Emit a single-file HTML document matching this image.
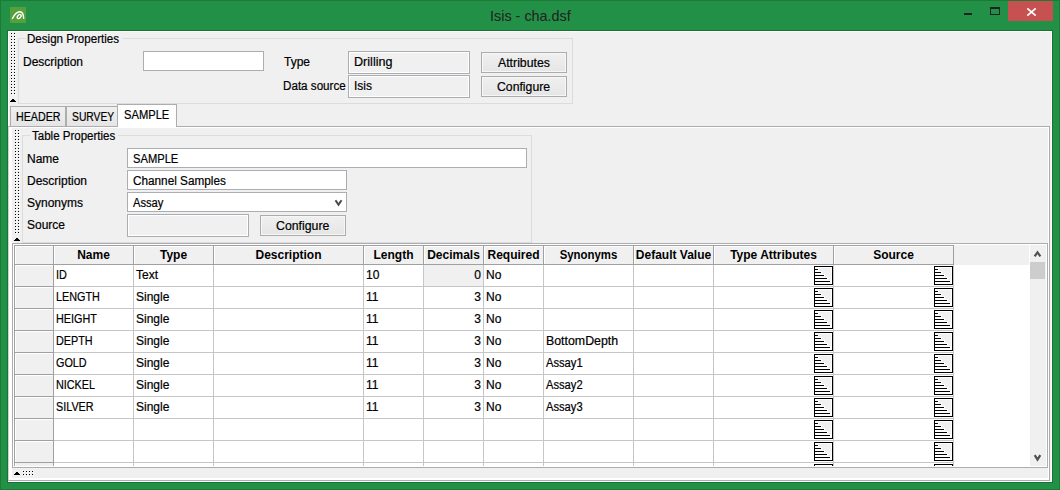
<!DOCTYPE html>
<html><head><meta charset="utf-8">
<style>
*{margin:0;padding:0;box-sizing:border-box}
html,body{width:1060px;height:490px;overflow:hidden}
body{background:#f0f0f0;font-family:"Liberation Sans",sans-serif;font-size:12px;color:#000;position:relative}
.a{position:absolute}
.t{position:absolute;white-space:nowrap;line-height:9px;height:9px;transform-origin:0 0;-webkit-text-stroke:0.2px #000}
.b{font-weight:bold;-webkit-text-stroke:0}
</style></head><body>
<div class="a" style="left:0px;top:0px;width:1060px;height:490px;border:1px solid #1c7c36;background:#229147"></div>
<div class="a" style="left:10px;top:7px;width:16px;height:16px;background:#55a03a"></div>
<svg class="a" style="left:10px;top:7px" width="16" height="16" viewBox="10 7 16 16"><path d="M12.4 18.5 C14 15.4 16.6 11.7 19.9 11.7 C22.4 11.7 23.5 13.8 23.7 18.4" fill="none" stroke="#fff" stroke-width="1.35" stroke-linecap="round"/><ellipse cx="19.2" cy="16.5" rx="1.5" ry="2.4" transform="rotate(42 19.2 16.5)" fill="none" stroke="#fff" stroke-width="1.3"/></svg>
<div class="t" style="left:490px;top:11px;font-size:15px;transform:scaleX(0.96);color:#222;-webkit-text-stroke:0">Isis - cha.dsf</div>
<div class="a" style="left:964px;top:13px;width:8px;height:2px;background:#222"></div>
<div class="a" style="left:990px;top:7px;width:10px;height:8px;border:1px solid #222;border-top-width:2px"></div>
<div class="a" style="left:1008px;top:1px;width:45px;height:20px;background:#c75050"></div>
<svg class="a" style="left:1008px;top:1px" width="45" height="20"><path d="M19.3 7.3 L27.7 14.7 M27.7 7.3 L19.3 14.7" stroke="#fff" stroke-width="1.7"/></svg>
<div class="a" style="left:7px;top:30px;width:1046px;height:453px;border:1px solid #177330;background:#fff"></div>
<div class="a" style="left:9px;top:32px;width:1042px;height:449px;background:#f0f0f0"></div>
<div class="a" style="left:12px;top:34px;width:1px;height:1px;background:#fff"></div>
<div class="a" style="left:11px;top:33px;width:1px;height:1px;background:#000"></div>
<div class="a" style="left:12px;top:37px;width:1px;height:1px;background:#fff"></div>
<div class="a" style="left:11px;top:36px;width:1px;height:1px;background:#000"></div>
<div class="a" style="left:12px;top:40px;width:1px;height:1px;background:#fff"></div>
<div class="a" style="left:11px;top:39px;width:1px;height:1px;background:#000"></div>
<div class="a" style="left:12px;top:43px;width:1px;height:1px;background:#fff"></div>
<div class="a" style="left:11px;top:42px;width:1px;height:1px;background:#000"></div>
<div class="a" style="left:12px;top:46px;width:1px;height:1px;background:#fff"></div>
<div class="a" style="left:11px;top:45px;width:1px;height:1px;background:#000"></div>
<div class="a" style="left:12px;top:49px;width:1px;height:1px;background:#fff"></div>
<div class="a" style="left:11px;top:48px;width:1px;height:1px;background:#000"></div>
<div class="a" style="left:12px;top:52px;width:1px;height:1px;background:#fff"></div>
<div class="a" style="left:11px;top:51px;width:1px;height:1px;background:#000"></div>
<div class="a" style="left:12px;top:55px;width:1px;height:1px;background:#fff"></div>
<div class="a" style="left:11px;top:54px;width:1px;height:1px;background:#000"></div>
<div class="a" style="left:12px;top:58px;width:1px;height:1px;background:#fff"></div>
<div class="a" style="left:11px;top:57px;width:1px;height:1px;background:#000"></div>
<div class="a" style="left:12px;top:61px;width:1px;height:1px;background:#fff"></div>
<div class="a" style="left:11px;top:60px;width:1px;height:1px;background:#000"></div>
<div class="a" style="left:12px;top:64px;width:1px;height:1px;background:#fff"></div>
<div class="a" style="left:11px;top:63px;width:1px;height:1px;background:#000"></div>
<div class="a" style="left:12px;top:67px;width:1px;height:1px;background:#fff"></div>
<div class="a" style="left:11px;top:66px;width:1px;height:1px;background:#000"></div>
<div class="a" style="left:12px;top:70px;width:1px;height:1px;background:#fff"></div>
<div class="a" style="left:11px;top:69px;width:1px;height:1px;background:#000"></div>
<div class="a" style="left:12px;top:73px;width:1px;height:1px;background:#fff"></div>
<div class="a" style="left:11px;top:72px;width:1px;height:1px;background:#000"></div>
<div class="a" style="left:12px;top:76px;width:1px;height:1px;background:#fff"></div>
<div class="a" style="left:11px;top:75px;width:1px;height:1px;background:#000"></div>
<div class="a" style="left:12px;top:79px;width:1px;height:1px;background:#fff"></div>
<div class="a" style="left:11px;top:78px;width:1px;height:1px;background:#000"></div>
<div class="a" style="left:12px;top:82px;width:1px;height:1px;background:#fff"></div>
<div class="a" style="left:11px;top:81px;width:1px;height:1px;background:#000"></div>
<div class="a" style="left:12px;top:85px;width:1px;height:1px;background:#fff"></div>
<div class="a" style="left:11px;top:84px;width:1px;height:1px;background:#000"></div>
<div class="a" style="left:12px;top:88px;width:1px;height:1px;background:#fff"></div>
<div class="a" style="left:11px;top:87px;width:1px;height:1px;background:#000"></div>
<div class="a" style="left:12px;top:91px;width:1px;height:1px;background:#fff"></div>
<div class="a" style="left:11px;top:90px;width:1px;height:1px;background:#000"></div>
<div class="a" style="left:12px;top:94px;width:1px;height:1px;background:#fff"></div>
<div class="a" style="left:11px;top:93px;width:1px;height:1px;background:#000"></div>
<div class="a" style="left:15px;top:34px;width:1px;height:1px;background:#fff"></div>
<div class="a" style="left:14px;top:33px;width:1px;height:1px;background:#000"></div>
<div class="a" style="left:15px;top:37px;width:1px;height:1px;background:#fff"></div>
<div class="a" style="left:14px;top:36px;width:1px;height:1px;background:#000"></div>
<div class="a" style="left:15px;top:40px;width:1px;height:1px;background:#fff"></div>
<div class="a" style="left:14px;top:39px;width:1px;height:1px;background:#000"></div>
<div class="a" style="left:15px;top:43px;width:1px;height:1px;background:#fff"></div>
<div class="a" style="left:14px;top:42px;width:1px;height:1px;background:#000"></div>
<div class="a" style="left:15px;top:46px;width:1px;height:1px;background:#fff"></div>
<div class="a" style="left:14px;top:45px;width:1px;height:1px;background:#000"></div>
<div class="a" style="left:15px;top:49px;width:1px;height:1px;background:#fff"></div>
<div class="a" style="left:14px;top:48px;width:1px;height:1px;background:#000"></div>
<div class="a" style="left:15px;top:52px;width:1px;height:1px;background:#fff"></div>
<div class="a" style="left:14px;top:51px;width:1px;height:1px;background:#000"></div>
<div class="a" style="left:15px;top:55px;width:1px;height:1px;background:#fff"></div>
<div class="a" style="left:14px;top:54px;width:1px;height:1px;background:#000"></div>
<div class="a" style="left:15px;top:58px;width:1px;height:1px;background:#fff"></div>
<div class="a" style="left:14px;top:57px;width:1px;height:1px;background:#000"></div>
<div class="a" style="left:15px;top:61px;width:1px;height:1px;background:#fff"></div>
<div class="a" style="left:14px;top:60px;width:1px;height:1px;background:#000"></div>
<div class="a" style="left:15px;top:64px;width:1px;height:1px;background:#fff"></div>
<div class="a" style="left:14px;top:63px;width:1px;height:1px;background:#000"></div>
<div class="a" style="left:15px;top:67px;width:1px;height:1px;background:#fff"></div>
<div class="a" style="left:14px;top:66px;width:1px;height:1px;background:#000"></div>
<div class="a" style="left:15px;top:70px;width:1px;height:1px;background:#fff"></div>
<div class="a" style="left:14px;top:69px;width:1px;height:1px;background:#000"></div>
<div class="a" style="left:15px;top:73px;width:1px;height:1px;background:#fff"></div>
<div class="a" style="left:14px;top:72px;width:1px;height:1px;background:#000"></div>
<div class="a" style="left:15px;top:76px;width:1px;height:1px;background:#fff"></div>
<div class="a" style="left:14px;top:75px;width:1px;height:1px;background:#000"></div>
<div class="a" style="left:15px;top:79px;width:1px;height:1px;background:#fff"></div>
<div class="a" style="left:14px;top:78px;width:1px;height:1px;background:#000"></div>
<div class="a" style="left:15px;top:82px;width:1px;height:1px;background:#fff"></div>
<div class="a" style="left:14px;top:81px;width:1px;height:1px;background:#000"></div>
<div class="a" style="left:15px;top:85px;width:1px;height:1px;background:#fff"></div>
<div class="a" style="left:14px;top:84px;width:1px;height:1px;background:#000"></div>
<div class="a" style="left:15px;top:88px;width:1px;height:1px;background:#fff"></div>
<div class="a" style="left:14px;top:87px;width:1px;height:1px;background:#000"></div>
<div class="a" style="left:15px;top:91px;width:1px;height:1px;background:#fff"></div>
<div class="a" style="left:14px;top:90px;width:1px;height:1px;background:#000"></div>
<div class="a" style="left:15px;top:94px;width:1px;height:1px;background:#fff"></div>
<div class="a" style="left:14px;top:93px;width:1px;height:1px;background:#000"></div>
<div class="a" style="left:12px;top:99px;width:2px;height:1px;background:#000"></div>
<div class="a" style="left:11px;top:100px;width:4px;height:1px;background:#000"></div>
<div class="a" style="left:10px;top:101px;width:6px;height:1px;background:#000"></div>
<div class="a" style="left:18px;top:38px;width:555px;height:66px;border:1px solid #dcdcdc;"></div>
<div class="a" style="left:26px;top:33px;width:96px;height:12px;background:#f0f0f0"></div>
<div class="t" style="left:27px;top:35px;font-size:12px;transform:scaleX(0.965);">Design Properties</div>
<div class="t" style="left:23px;top:58px;font-size:12px;">Description</div>
<div class="a" style="left:143px;top:51px;width:121px;height:20px;border:1px solid #abadb3;background:#fff"></div>
<div class="t" style="left:284px;top:58px;font-size:12px;">Type</div>
<div class="t" style="left:283px;top:82px;font-size:12px;transform:scaleX(0.97);">Data source</div>
<div class="a" style="left:348px;top:51px;width:122px;height:23px;border:1px solid #abadb3;background:#f0f0f0;box-shadow:inset 0 0 0 1px #fff"></div>
<div class="a" style="left:348px;top:75px;width:122px;height:23px;border:1px solid #abadb3;background:#f0f0f0;box-shadow:inset 0 0 0 1px #fff"></div>
<div class="t" style="left:354px;top:58px;font-size:12px;transform:scaleX(1.05);">Drilling</div>
<div class="t" style="left:354px;top:82px;font-size:12px;">Isis</div>
<div class="a" style="left:481px;top:52px;width:86px;height:21px;border:1px solid #acacac;background:linear-gradient(#f0f0f0,#e5e5e5);box-shadow:inset 0 0 0 1px #f6f6f6"></div>
<div class="a" style="left:481px;top:76px;width:86px;height:21px;border:1px solid #acacac;background:linear-gradient(#f0f0f0,#e5e5e5);box-shadow:inset 0 0 0 1px #f6f6f6"></div>
<div class="t" style="left:498px;top:59px;font-size:12px;transform:scaleX(1.025);">Attributes</div>
<div class="t" style="left:497px;top:83px;font-size:12px;transform:scaleX(1.02);">Configure</div>
<div class="a" style="left:8px;top:126px;width:1042px;height:355px;border:1px solid #adadad;background:#fff;border-left-color:#d4d0d4"></div>
<div class="a" style="left:12px;top:128px;width:1036px;height:350px;background:#f0f0f0"></div>
<div class="a" style="left:10px;top:106px;width:56px;height:21px;border:1px solid #adadad;background:linear-gradient(#f0f0f0,#e5e5e5)"></div>
<div class="a" style="left:66px;top:106px;width:52px;height:21px;border:1px solid #adadad;background:linear-gradient(#f0f0f0,#e5e5e5)"></div>
<div class="a" style="left:117px;top:104px;width:60px;height:23px;border:1px solid #adadad;background:#fff;border-bottom:none"></div>
<div class="t" style="left:16px;top:113px;font-size:12px;transform:scaleX(0.89);">HEADER</div>
<div class="t" style="left:72px;top:113px;font-size:12px;transform:scaleX(0.86);">SURVEY</div>
<div class="t" style="left:124px;top:111px;font-size:12px;transform:scaleX(0.93);">SAMPLE</div>
<div class="a" style="left:16px;top:131px;width:1px;height:1px;background:#fff"></div>
<div class="a" style="left:15px;top:130px;width:1px;height:1px;background:#000"></div>
<div class="a" style="left:16px;top:134px;width:1px;height:1px;background:#fff"></div>
<div class="a" style="left:15px;top:133px;width:1px;height:1px;background:#000"></div>
<div class="a" style="left:16px;top:137px;width:1px;height:1px;background:#fff"></div>
<div class="a" style="left:15px;top:136px;width:1px;height:1px;background:#000"></div>
<div class="a" style="left:16px;top:140px;width:1px;height:1px;background:#fff"></div>
<div class="a" style="left:15px;top:139px;width:1px;height:1px;background:#000"></div>
<div class="a" style="left:16px;top:143px;width:1px;height:1px;background:#fff"></div>
<div class="a" style="left:15px;top:142px;width:1px;height:1px;background:#000"></div>
<div class="a" style="left:16px;top:146px;width:1px;height:1px;background:#fff"></div>
<div class="a" style="left:15px;top:145px;width:1px;height:1px;background:#000"></div>
<div class="a" style="left:16px;top:149px;width:1px;height:1px;background:#fff"></div>
<div class="a" style="left:15px;top:148px;width:1px;height:1px;background:#000"></div>
<div class="a" style="left:16px;top:152px;width:1px;height:1px;background:#fff"></div>
<div class="a" style="left:15px;top:151px;width:1px;height:1px;background:#000"></div>
<div class="a" style="left:16px;top:155px;width:1px;height:1px;background:#fff"></div>
<div class="a" style="left:15px;top:154px;width:1px;height:1px;background:#000"></div>
<div class="a" style="left:16px;top:158px;width:1px;height:1px;background:#fff"></div>
<div class="a" style="left:15px;top:157px;width:1px;height:1px;background:#000"></div>
<div class="a" style="left:16px;top:161px;width:1px;height:1px;background:#fff"></div>
<div class="a" style="left:15px;top:160px;width:1px;height:1px;background:#000"></div>
<div class="a" style="left:16px;top:164px;width:1px;height:1px;background:#fff"></div>
<div class="a" style="left:15px;top:163px;width:1px;height:1px;background:#000"></div>
<div class="a" style="left:16px;top:167px;width:1px;height:1px;background:#fff"></div>
<div class="a" style="left:15px;top:166px;width:1px;height:1px;background:#000"></div>
<div class="a" style="left:16px;top:170px;width:1px;height:1px;background:#fff"></div>
<div class="a" style="left:15px;top:169px;width:1px;height:1px;background:#000"></div>
<div class="a" style="left:16px;top:173px;width:1px;height:1px;background:#fff"></div>
<div class="a" style="left:15px;top:172px;width:1px;height:1px;background:#000"></div>
<div class="a" style="left:16px;top:176px;width:1px;height:1px;background:#fff"></div>
<div class="a" style="left:15px;top:175px;width:1px;height:1px;background:#000"></div>
<div class="a" style="left:16px;top:179px;width:1px;height:1px;background:#fff"></div>
<div class="a" style="left:15px;top:178px;width:1px;height:1px;background:#000"></div>
<div class="a" style="left:16px;top:182px;width:1px;height:1px;background:#fff"></div>
<div class="a" style="left:15px;top:181px;width:1px;height:1px;background:#000"></div>
<div class="a" style="left:16px;top:185px;width:1px;height:1px;background:#fff"></div>
<div class="a" style="left:15px;top:184px;width:1px;height:1px;background:#000"></div>
<div class="a" style="left:16px;top:188px;width:1px;height:1px;background:#fff"></div>
<div class="a" style="left:15px;top:187px;width:1px;height:1px;background:#000"></div>
<div class="a" style="left:16px;top:191px;width:1px;height:1px;background:#fff"></div>
<div class="a" style="left:15px;top:190px;width:1px;height:1px;background:#000"></div>
<div class="a" style="left:16px;top:194px;width:1px;height:1px;background:#fff"></div>
<div class="a" style="left:15px;top:193px;width:1px;height:1px;background:#000"></div>
<div class="a" style="left:16px;top:197px;width:1px;height:1px;background:#fff"></div>
<div class="a" style="left:15px;top:196px;width:1px;height:1px;background:#000"></div>
<div class="a" style="left:16px;top:200px;width:1px;height:1px;background:#fff"></div>
<div class="a" style="left:15px;top:199px;width:1px;height:1px;background:#000"></div>
<div class="a" style="left:16px;top:203px;width:1px;height:1px;background:#fff"></div>
<div class="a" style="left:15px;top:202px;width:1px;height:1px;background:#000"></div>
<div class="a" style="left:16px;top:206px;width:1px;height:1px;background:#fff"></div>
<div class="a" style="left:15px;top:205px;width:1px;height:1px;background:#000"></div>
<div class="a" style="left:16px;top:209px;width:1px;height:1px;background:#fff"></div>
<div class="a" style="left:15px;top:208px;width:1px;height:1px;background:#000"></div>
<div class="a" style="left:16px;top:212px;width:1px;height:1px;background:#fff"></div>
<div class="a" style="left:15px;top:211px;width:1px;height:1px;background:#000"></div>
<div class="a" style="left:16px;top:215px;width:1px;height:1px;background:#fff"></div>
<div class="a" style="left:15px;top:214px;width:1px;height:1px;background:#000"></div>
<div class="a" style="left:16px;top:218px;width:1px;height:1px;background:#fff"></div>
<div class="a" style="left:15px;top:217px;width:1px;height:1px;background:#000"></div>
<div class="a" style="left:16px;top:221px;width:1px;height:1px;background:#fff"></div>
<div class="a" style="left:15px;top:220px;width:1px;height:1px;background:#000"></div>
<div class="a" style="left:16px;top:224px;width:1px;height:1px;background:#fff"></div>
<div class="a" style="left:15px;top:223px;width:1px;height:1px;background:#000"></div>
<div class="a" style="left:16px;top:227px;width:1px;height:1px;background:#fff"></div>
<div class="a" style="left:15px;top:226px;width:1px;height:1px;background:#000"></div>
<div class="a" style="left:16px;top:230px;width:1px;height:1px;background:#fff"></div>
<div class="a" style="left:15px;top:229px;width:1px;height:1px;background:#000"></div>
<div class="a" style="left:16px;top:233px;width:1px;height:1px;background:#fff"></div>
<div class="a" style="left:15px;top:232px;width:1px;height:1px;background:#000"></div>
<div class="a" style="left:19px;top:131px;width:1px;height:1px;background:#fff"></div>
<div class="a" style="left:18px;top:130px;width:1px;height:1px;background:#000"></div>
<div class="a" style="left:19px;top:134px;width:1px;height:1px;background:#fff"></div>
<div class="a" style="left:18px;top:133px;width:1px;height:1px;background:#000"></div>
<div class="a" style="left:19px;top:137px;width:1px;height:1px;background:#fff"></div>
<div class="a" style="left:18px;top:136px;width:1px;height:1px;background:#000"></div>
<div class="a" style="left:19px;top:140px;width:1px;height:1px;background:#fff"></div>
<div class="a" style="left:18px;top:139px;width:1px;height:1px;background:#000"></div>
<div class="a" style="left:19px;top:143px;width:1px;height:1px;background:#fff"></div>
<div class="a" style="left:18px;top:142px;width:1px;height:1px;background:#000"></div>
<div class="a" style="left:19px;top:146px;width:1px;height:1px;background:#fff"></div>
<div class="a" style="left:18px;top:145px;width:1px;height:1px;background:#000"></div>
<div class="a" style="left:19px;top:149px;width:1px;height:1px;background:#fff"></div>
<div class="a" style="left:18px;top:148px;width:1px;height:1px;background:#000"></div>
<div class="a" style="left:19px;top:152px;width:1px;height:1px;background:#fff"></div>
<div class="a" style="left:18px;top:151px;width:1px;height:1px;background:#000"></div>
<div class="a" style="left:19px;top:155px;width:1px;height:1px;background:#fff"></div>
<div class="a" style="left:18px;top:154px;width:1px;height:1px;background:#000"></div>
<div class="a" style="left:19px;top:158px;width:1px;height:1px;background:#fff"></div>
<div class="a" style="left:18px;top:157px;width:1px;height:1px;background:#000"></div>
<div class="a" style="left:19px;top:161px;width:1px;height:1px;background:#fff"></div>
<div class="a" style="left:18px;top:160px;width:1px;height:1px;background:#000"></div>
<div class="a" style="left:19px;top:164px;width:1px;height:1px;background:#fff"></div>
<div class="a" style="left:18px;top:163px;width:1px;height:1px;background:#000"></div>
<div class="a" style="left:19px;top:167px;width:1px;height:1px;background:#fff"></div>
<div class="a" style="left:18px;top:166px;width:1px;height:1px;background:#000"></div>
<div class="a" style="left:19px;top:170px;width:1px;height:1px;background:#fff"></div>
<div class="a" style="left:18px;top:169px;width:1px;height:1px;background:#000"></div>
<div class="a" style="left:19px;top:173px;width:1px;height:1px;background:#fff"></div>
<div class="a" style="left:18px;top:172px;width:1px;height:1px;background:#000"></div>
<div class="a" style="left:19px;top:176px;width:1px;height:1px;background:#fff"></div>
<div class="a" style="left:18px;top:175px;width:1px;height:1px;background:#000"></div>
<div class="a" style="left:19px;top:179px;width:1px;height:1px;background:#fff"></div>
<div class="a" style="left:18px;top:178px;width:1px;height:1px;background:#000"></div>
<div class="a" style="left:19px;top:182px;width:1px;height:1px;background:#fff"></div>
<div class="a" style="left:18px;top:181px;width:1px;height:1px;background:#000"></div>
<div class="a" style="left:19px;top:185px;width:1px;height:1px;background:#fff"></div>
<div class="a" style="left:18px;top:184px;width:1px;height:1px;background:#000"></div>
<div class="a" style="left:19px;top:188px;width:1px;height:1px;background:#fff"></div>
<div class="a" style="left:18px;top:187px;width:1px;height:1px;background:#000"></div>
<div class="a" style="left:19px;top:191px;width:1px;height:1px;background:#fff"></div>
<div class="a" style="left:18px;top:190px;width:1px;height:1px;background:#000"></div>
<div class="a" style="left:19px;top:194px;width:1px;height:1px;background:#fff"></div>
<div class="a" style="left:18px;top:193px;width:1px;height:1px;background:#000"></div>
<div class="a" style="left:19px;top:197px;width:1px;height:1px;background:#fff"></div>
<div class="a" style="left:18px;top:196px;width:1px;height:1px;background:#000"></div>
<div class="a" style="left:19px;top:200px;width:1px;height:1px;background:#fff"></div>
<div class="a" style="left:18px;top:199px;width:1px;height:1px;background:#000"></div>
<div class="a" style="left:19px;top:203px;width:1px;height:1px;background:#fff"></div>
<div class="a" style="left:18px;top:202px;width:1px;height:1px;background:#000"></div>
<div class="a" style="left:19px;top:206px;width:1px;height:1px;background:#fff"></div>
<div class="a" style="left:18px;top:205px;width:1px;height:1px;background:#000"></div>
<div class="a" style="left:19px;top:209px;width:1px;height:1px;background:#fff"></div>
<div class="a" style="left:18px;top:208px;width:1px;height:1px;background:#000"></div>
<div class="a" style="left:19px;top:212px;width:1px;height:1px;background:#fff"></div>
<div class="a" style="left:18px;top:211px;width:1px;height:1px;background:#000"></div>
<div class="a" style="left:19px;top:215px;width:1px;height:1px;background:#fff"></div>
<div class="a" style="left:18px;top:214px;width:1px;height:1px;background:#000"></div>
<div class="a" style="left:19px;top:218px;width:1px;height:1px;background:#fff"></div>
<div class="a" style="left:18px;top:217px;width:1px;height:1px;background:#000"></div>
<div class="a" style="left:19px;top:221px;width:1px;height:1px;background:#fff"></div>
<div class="a" style="left:18px;top:220px;width:1px;height:1px;background:#000"></div>
<div class="a" style="left:19px;top:224px;width:1px;height:1px;background:#fff"></div>
<div class="a" style="left:18px;top:223px;width:1px;height:1px;background:#000"></div>
<div class="a" style="left:19px;top:227px;width:1px;height:1px;background:#fff"></div>
<div class="a" style="left:18px;top:226px;width:1px;height:1px;background:#000"></div>
<div class="a" style="left:19px;top:230px;width:1px;height:1px;background:#fff"></div>
<div class="a" style="left:18px;top:229px;width:1px;height:1px;background:#000"></div>
<div class="a" style="left:19px;top:233px;width:1px;height:1px;background:#fff"></div>
<div class="a" style="left:18px;top:232px;width:1px;height:1px;background:#000"></div>
<div class="a" style="left:16px;top:238px;width:2px;height:1px;background:#000"></div>
<div class="a" style="left:15px;top:239px;width:4px;height:1px;background:#000"></div>
<div class="a" style="left:14px;top:240px;width:6px;height:1px;background:#000"></div>
<div class="a" style="left:22px;top:135px;width:510px;height:108px;border:1px solid #dcdcdc;"></div>
<div class="a" style="left:30px;top:130px;width:88px;height:12px;background:#f0f0f0"></div>
<div class="t" style="left:32px;top:132px;font-size:12px;transform:scaleX(0.96);">Table Properties</div>
<div class="t" style="left:27px;top:155px;font-size:12px;">Name</div>
<div class="t" style="left:27px;top:177px;font-size:12px;">Description</div>
<div class="t" style="left:27px;top:199px;font-size:12px;">Synonyms</div>
<div class="t" style="left:27px;top:221px;font-size:12px;">Source</div>
<div class="a" style="left:127px;top:148px;width:400px;height:20px;border:1px solid #abadb3;background:#fff"></div>
<div class="a" style="left:127px;top:170px;width:220px;height:20px;border:1px solid #abadb3;background:#fff"></div>
<div class="a" style="left:127px;top:192px;width:220px;height:20px;border:1px solid #abadb3;background:#fff"></div>
<div class="a" style="left:127px;top:214px;width:122px;height:23px;border:1px solid #abadb3;background:#f0f0f0;box-shadow:inset 0 0 0 1px #fff"></div>
<div class="a" style="left:260px;top:215px;width:86px;height:21px;border:1px solid #acacac;background:linear-gradient(#f0f0f0,#e5e5e5);box-shadow:inset 0 0 0 1px #f6f6f6"></div>
<div class="t" style="left:133px;top:155px;font-size:12px;transform:scaleX(0.93);">SAMPLE</div>
<div class="t" style="left:133px;top:177px;font-size:12px;transform:scaleX(0.98);">Channel Samples</div>
<div class="t" style="left:133px;top:199px;font-size:12px;transform:scaleX(0.93);">Assay</div>
<div class="t" style="left:276px;top:222px;font-size:12px;transform:scaleX(1.025);">Configure</div>
<svg class="a" style="left:334px;top:199px" width="9" height="8"><path d="M1.5 1.3 L4.5 5.8 L7.5 1.3" fill="none" stroke="#484848" stroke-width="2"/></svg>
<div class="a" style="left:12px;top:243px;width:1036px;height:225px;border:1px solid #abadb3;background:#fff"></div>
<div class="a" style="left:14px;top:245px;width:1032px;height:221px;background:#fff"></div>
<div class="a" style="left:14px;top:245px;width:1016px;height:20px;background:#f0f0f0"></div>
<div class="a" style="left:14px;top:245px;width:40px;height:221px;background:#f0f0f0"></div>
<div class="a" style="left:424px;top:265px;width:59px;height:21px;background:#f0f0f0"></div>
<div class="a" style="left:15px;top:246px;width:38px;height:1px;background:#fff"></div>
<div class="a" style="left:54px;top:246px;width:79px;height:1px;background:#fff"></div>
<div class="a" style="left:54px;top:246px;width:1px;height:18px;background:#fff"></div>
<div class="a" style="left:134px;top:246px;width:79px;height:1px;background:#fff"></div>
<div class="a" style="left:134px;top:246px;width:1px;height:18px;background:#fff"></div>
<div class="a" style="left:214px;top:246px;width:149px;height:1px;background:#fff"></div>
<div class="a" style="left:214px;top:246px;width:1px;height:18px;background:#fff"></div>
<div class="a" style="left:364px;top:246px;width:59px;height:1px;background:#fff"></div>
<div class="a" style="left:364px;top:246px;width:1px;height:18px;background:#fff"></div>
<div class="a" style="left:424px;top:246px;width:59px;height:1px;background:#fff"></div>
<div class="a" style="left:424px;top:246px;width:1px;height:18px;background:#fff"></div>
<div class="a" style="left:484px;top:246px;width:59px;height:1px;background:#fff"></div>
<div class="a" style="left:484px;top:246px;width:1px;height:18px;background:#fff"></div>
<div class="a" style="left:544px;top:246px;width:89px;height:1px;background:#fff"></div>
<div class="a" style="left:544px;top:246px;width:1px;height:18px;background:#fff"></div>
<div class="a" style="left:634px;top:246px;width:79px;height:1px;background:#fff"></div>
<div class="a" style="left:634px;top:246px;width:1px;height:18px;background:#fff"></div>
<div class="a" style="left:714px;top:246px;width:119px;height:1px;background:#fff"></div>
<div class="a" style="left:714px;top:246px;width:1px;height:18px;background:#fff"></div>
<div class="a" style="left:834px;top:246px;width:119px;height:1px;background:#fff"></div>
<div class="a" style="left:834px;top:246px;width:1px;height:18px;background:#fff"></div>
<div class="a" style="left:15px;top:246px;width:1px;height:220px;background:#fff"></div>
<div class="a" style="left:15px;top:265px;width:38px;height:1px;background:#fff"></div>
<div class="a" style="left:15px;top:287px;width:38px;height:1px;background:#fff"></div>
<div class="a" style="left:15px;top:309px;width:38px;height:1px;background:#fff"></div>
<div class="a" style="left:15px;top:331px;width:38px;height:1px;background:#fff"></div>
<div class="a" style="left:15px;top:353px;width:38px;height:1px;background:#fff"></div>
<div class="a" style="left:15px;top:375px;width:38px;height:1px;background:#fff"></div>
<div class="a" style="left:15px;top:397px;width:38px;height:1px;background:#fff"></div>
<div class="a" style="left:15px;top:419px;width:38px;height:1px;background:#fff"></div>
<div class="a" style="left:15px;top:441px;width:38px;height:1px;background:#fff"></div>
<div class="a" style="left:14px;top:264px;width:940px;height:1px;background:#a0a0a0"></div>
<div class="a" style="left:14px;top:286px;width:40px;height:1px;background:#a0a0a0"></div>
<div class="a" style="left:54px;top:286px;width:900px;height:1px;background:#c6c6c6"></div>
<div class="a" style="left:14px;top:308px;width:40px;height:1px;background:#a0a0a0"></div>
<div class="a" style="left:54px;top:308px;width:900px;height:1px;background:#c6c6c6"></div>
<div class="a" style="left:14px;top:330px;width:40px;height:1px;background:#a0a0a0"></div>
<div class="a" style="left:54px;top:330px;width:900px;height:1px;background:#c6c6c6"></div>
<div class="a" style="left:14px;top:352px;width:40px;height:1px;background:#a0a0a0"></div>
<div class="a" style="left:54px;top:352px;width:900px;height:1px;background:#c6c6c6"></div>
<div class="a" style="left:14px;top:374px;width:40px;height:1px;background:#a0a0a0"></div>
<div class="a" style="left:54px;top:374px;width:900px;height:1px;background:#c6c6c6"></div>
<div class="a" style="left:14px;top:396px;width:40px;height:1px;background:#a0a0a0"></div>
<div class="a" style="left:54px;top:396px;width:900px;height:1px;background:#c6c6c6"></div>
<div class="a" style="left:14px;top:418px;width:40px;height:1px;background:#a0a0a0"></div>
<div class="a" style="left:54px;top:418px;width:900px;height:1px;background:#c6c6c6"></div>
<div class="a" style="left:14px;top:440px;width:40px;height:1px;background:#a0a0a0"></div>
<div class="a" style="left:54px;top:440px;width:900px;height:1px;background:#c6c6c6"></div>
<div class="a" style="left:14px;top:462px;width:40px;height:1px;background:#a0a0a0"></div>
<div class="a" style="left:54px;top:462px;width:900px;height:1px;background:#c6c6c6"></div>
<div class="a" style="left:14px;top:245px;width:940px;height:1px;background:#a0a0a0"></div>
<div class="a" style="left:14px;top:245px;width:1px;height:221px;background:#a0a0a0"></div>
<div class="a" style="left:53px;top:245px;width:1px;height:221px;background:#a0a0a0"></div>
<div class="a" style="left:133px;top:245px;width:1px;height:221px;background:#c6c6c6"></div>
<div class="a" style="left:133px;top:245px;width:1px;height:20px;background:#a0a0a0"></div>
<div class="a" style="left:213px;top:245px;width:1px;height:221px;background:#c6c6c6"></div>
<div class="a" style="left:213px;top:245px;width:1px;height:20px;background:#a0a0a0"></div>
<div class="a" style="left:363px;top:245px;width:1px;height:221px;background:#c6c6c6"></div>
<div class="a" style="left:363px;top:245px;width:1px;height:20px;background:#a0a0a0"></div>
<div class="a" style="left:423px;top:245px;width:1px;height:221px;background:#c6c6c6"></div>
<div class="a" style="left:423px;top:245px;width:1px;height:20px;background:#a0a0a0"></div>
<div class="a" style="left:483px;top:245px;width:1px;height:221px;background:#c6c6c6"></div>
<div class="a" style="left:483px;top:245px;width:1px;height:20px;background:#a0a0a0"></div>
<div class="a" style="left:543px;top:245px;width:1px;height:221px;background:#c6c6c6"></div>
<div class="a" style="left:543px;top:245px;width:1px;height:20px;background:#a0a0a0"></div>
<div class="a" style="left:633px;top:245px;width:1px;height:221px;background:#c6c6c6"></div>
<div class="a" style="left:633px;top:245px;width:1px;height:20px;background:#a0a0a0"></div>
<div class="a" style="left:713px;top:245px;width:1px;height:221px;background:#c6c6c6"></div>
<div class="a" style="left:713px;top:245px;width:1px;height:20px;background:#a0a0a0"></div>
<div class="a" style="left:833px;top:245px;width:1px;height:221px;background:#c6c6c6"></div>
<div class="a" style="left:833px;top:245px;width:1px;height:20px;background:#a0a0a0"></div>
<div class="a" style="left:953px;top:245px;width:1px;height:221px;background:#c6c6c6"></div>
<div class="a" style="left:953px;top:245px;width:1px;height:20px;background:#a0a0a0"></div>
<div class="t b" style="left:54px;top:251px;width:79px;text-align:center;">Name</div>
<div class="t b" style="left:134px;top:251px;width:79px;text-align:center;">Type</div>
<div class="t b" style="left:214px;top:251px;width:149px;text-align:center;">Description</div>
<div class="t b" style="left:364px;top:251px;width:59px;text-align:center;">Length</div>
<div class="t b" style="left:424px;top:251px;width:59px;text-align:center;">Decimals</div>
<div class="t b" style="left:484px;top:251px;width:59px;text-align:center;">Required</div>
<div class="t b" style="left:544px;top:251px;width:89px;text-align:center;transform:scaleX(0.95);transform-origin:50% 0;">Synonyms</div>
<div class="t b" style="left:634px;top:251px;width:79px;text-align:center;">Default Value</div>
<div class="t b" style="left:714px;top:251px;width:119px;text-align:center;">Type Attributes</div>
<div class="t b" style="left:834px;top:251px;width:119px;text-align:center;">Source</div>
<div class="t" style="left:56px;top:271px;font-size:12px;transform:scaleX(0.9);">ID</div>
<div class="t" style="left:136px;top:271px;font-size:12px;">Text</div>
<div class="t" style="left:366px;top:271px;font-size:12px;">10</div>
<div class="t" style="left:424px;top:271px;width:57px;text-align:right">0</div>
<div class="t" style="left:486px;top:271px;font-size:12px;">No</div>
<div class="t" style="left:56px;top:293px;font-size:12px;transform:scaleX(0.9);">LENGTH</div>
<div class="t" style="left:136px;top:293px;font-size:12px;">Single</div>
<div class="t" style="left:366px;top:293px;font-size:12px;">11</div>
<div class="t" style="left:424px;top:293px;width:57px;text-align:right">3</div>
<div class="t" style="left:486px;top:293px;font-size:12px;">No</div>
<div class="t" style="left:56px;top:315px;font-size:12px;transform:scaleX(0.9);">HEIGHT</div>
<div class="t" style="left:136px;top:315px;font-size:12px;">Single</div>
<div class="t" style="left:366px;top:315px;font-size:12px;">11</div>
<div class="t" style="left:424px;top:315px;width:57px;text-align:right">3</div>
<div class="t" style="left:486px;top:315px;font-size:12px;">No</div>
<div class="t" style="left:56px;top:337px;font-size:12px;transform:scaleX(0.9);">DEPTH</div>
<div class="t" style="left:136px;top:337px;font-size:12px;">Single</div>
<div class="t" style="left:366px;top:337px;font-size:12px;">11</div>
<div class="t" style="left:424px;top:337px;width:57px;text-align:right">3</div>
<div class="t" style="left:486px;top:337px;font-size:12px;">No</div>
<div class="t" style="left:546px;top:337px;font-size:12px;transform:scaleX(1.03);">BottomDepth</div>
<div class="t" style="left:56px;top:359px;font-size:12px;transform:scaleX(0.9);">GOLD</div>
<div class="t" style="left:136px;top:359px;font-size:12px;">Single</div>
<div class="t" style="left:366px;top:359px;font-size:12px;">11</div>
<div class="t" style="left:424px;top:359px;width:57px;text-align:right">3</div>
<div class="t" style="left:486px;top:359px;font-size:12px;">No</div>
<div class="t" style="left:546px;top:359px;font-size:12px;transform:scaleX(0.93);">Assay1</div>
<div class="t" style="left:56px;top:381px;font-size:12px;transform:scaleX(0.9);">NICKEL</div>
<div class="t" style="left:136px;top:381px;font-size:12px;">Single</div>
<div class="t" style="left:366px;top:381px;font-size:12px;">11</div>
<div class="t" style="left:424px;top:381px;width:57px;text-align:right">3</div>
<div class="t" style="left:486px;top:381px;font-size:12px;">No</div>
<div class="t" style="left:546px;top:381px;font-size:12px;transform:scaleX(0.93);">Assay2</div>
<div class="t" style="left:56px;top:403px;font-size:12px;transform:scaleX(0.9);">SILVER</div>
<div class="t" style="left:136px;top:403px;font-size:12px;">Single</div>
<div class="t" style="left:366px;top:403px;font-size:12px;">11</div>
<div class="t" style="left:424px;top:403px;width:57px;text-align:right">3</div>
<div class="t" style="left:486px;top:403px;font-size:12px;">No</div>
<div class="t" style="left:546px;top:403px;font-size:12px;transform:scaleX(0.93);">Assay3</div>
<div class="a" style="left:814px;top:266px;width:19px;height:19px;overflow:hidden">
<div class="a" style="left:0;top:0;width:19px;height:19px;border:1px solid #000;background:#fff"></div>
<div class="a" style="left:5px;top:2px;width:12px;height:3px;background:#f0f0f0"></div>
<div class="a" style="left:1px;top:3px;width:3px;height:1px;background:#000"></div>
<div class="a" style="left:8px;top:5px;width:9px;height:3px;background:#f0f0f0"></div>
<div class="a" style="left:1px;top:6px;width:6px;height:1px;background:#000"></div>
<div class="a" style="left:11px;top:8px;width:6px;height:3px;background:#f0f0f0"></div>
<div class="a" style="left:1px;top:9px;width:9px;height:1px;background:#000"></div>
<div class="a" style="left:14px;top:11px;width:3px;height:3px;background:#f0f0f0"></div>
<div class="a" style="left:1px;top:12px;width:12px;height:1px;background:#000"></div>
<div class="a" style="left:1px;top:15px;width:15px;height:1px;background:#000"></div>
</div>
<div class="a" style="left:934px;top:266px;width:19px;height:19px;overflow:hidden">
<div class="a" style="left:0;top:0;width:19px;height:19px;border:1px solid #000;background:#fff"></div>
<div class="a" style="left:5px;top:2px;width:12px;height:3px;background:#f0f0f0"></div>
<div class="a" style="left:1px;top:3px;width:3px;height:1px;background:#000"></div>
<div class="a" style="left:8px;top:5px;width:9px;height:3px;background:#f0f0f0"></div>
<div class="a" style="left:1px;top:6px;width:6px;height:1px;background:#000"></div>
<div class="a" style="left:11px;top:8px;width:6px;height:3px;background:#f0f0f0"></div>
<div class="a" style="left:1px;top:9px;width:9px;height:1px;background:#000"></div>
<div class="a" style="left:14px;top:11px;width:3px;height:3px;background:#f0f0f0"></div>
<div class="a" style="left:1px;top:12px;width:12px;height:1px;background:#000"></div>
<div class="a" style="left:1px;top:15px;width:15px;height:1px;background:#000"></div>
</div>
<div class="a" style="left:814px;top:288px;width:19px;height:19px;overflow:hidden">
<div class="a" style="left:0;top:0;width:19px;height:19px;border:1px solid #000;background:#fff"></div>
<div class="a" style="left:5px;top:2px;width:12px;height:3px;background:#f0f0f0"></div>
<div class="a" style="left:1px;top:3px;width:3px;height:1px;background:#000"></div>
<div class="a" style="left:8px;top:5px;width:9px;height:3px;background:#f0f0f0"></div>
<div class="a" style="left:1px;top:6px;width:6px;height:1px;background:#000"></div>
<div class="a" style="left:11px;top:8px;width:6px;height:3px;background:#f0f0f0"></div>
<div class="a" style="left:1px;top:9px;width:9px;height:1px;background:#000"></div>
<div class="a" style="left:14px;top:11px;width:3px;height:3px;background:#f0f0f0"></div>
<div class="a" style="left:1px;top:12px;width:12px;height:1px;background:#000"></div>
<div class="a" style="left:1px;top:15px;width:15px;height:1px;background:#000"></div>
</div>
<div class="a" style="left:934px;top:288px;width:19px;height:19px;overflow:hidden">
<div class="a" style="left:0;top:0;width:19px;height:19px;border:1px solid #000;background:#fff"></div>
<div class="a" style="left:5px;top:2px;width:12px;height:3px;background:#f0f0f0"></div>
<div class="a" style="left:1px;top:3px;width:3px;height:1px;background:#000"></div>
<div class="a" style="left:8px;top:5px;width:9px;height:3px;background:#f0f0f0"></div>
<div class="a" style="left:1px;top:6px;width:6px;height:1px;background:#000"></div>
<div class="a" style="left:11px;top:8px;width:6px;height:3px;background:#f0f0f0"></div>
<div class="a" style="left:1px;top:9px;width:9px;height:1px;background:#000"></div>
<div class="a" style="left:14px;top:11px;width:3px;height:3px;background:#f0f0f0"></div>
<div class="a" style="left:1px;top:12px;width:12px;height:1px;background:#000"></div>
<div class="a" style="left:1px;top:15px;width:15px;height:1px;background:#000"></div>
</div>
<div class="a" style="left:814px;top:310px;width:19px;height:19px;overflow:hidden">
<div class="a" style="left:0;top:0;width:19px;height:19px;border:1px solid #000;background:#fff"></div>
<div class="a" style="left:5px;top:2px;width:12px;height:3px;background:#f0f0f0"></div>
<div class="a" style="left:1px;top:3px;width:3px;height:1px;background:#000"></div>
<div class="a" style="left:8px;top:5px;width:9px;height:3px;background:#f0f0f0"></div>
<div class="a" style="left:1px;top:6px;width:6px;height:1px;background:#000"></div>
<div class="a" style="left:11px;top:8px;width:6px;height:3px;background:#f0f0f0"></div>
<div class="a" style="left:1px;top:9px;width:9px;height:1px;background:#000"></div>
<div class="a" style="left:14px;top:11px;width:3px;height:3px;background:#f0f0f0"></div>
<div class="a" style="left:1px;top:12px;width:12px;height:1px;background:#000"></div>
<div class="a" style="left:1px;top:15px;width:15px;height:1px;background:#000"></div>
</div>
<div class="a" style="left:934px;top:310px;width:19px;height:19px;overflow:hidden">
<div class="a" style="left:0;top:0;width:19px;height:19px;border:1px solid #000;background:#fff"></div>
<div class="a" style="left:5px;top:2px;width:12px;height:3px;background:#f0f0f0"></div>
<div class="a" style="left:1px;top:3px;width:3px;height:1px;background:#000"></div>
<div class="a" style="left:8px;top:5px;width:9px;height:3px;background:#f0f0f0"></div>
<div class="a" style="left:1px;top:6px;width:6px;height:1px;background:#000"></div>
<div class="a" style="left:11px;top:8px;width:6px;height:3px;background:#f0f0f0"></div>
<div class="a" style="left:1px;top:9px;width:9px;height:1px;background:#000"></div>
<div class="a" style="left:14px;top:11px;width:3px;height:3px;background:#f0f0f0"></div>
<div class="a" style="left:1px;top:12px;width:12px;height:1px;background:#000"></div>
<div class="a" style="left:1px;top:15px;width:15px;height:1px;background:#000"></div>
</div>
<div class="a" style="left:814px;top:332px;width:19px;height:19px;overflow:hidden">
<div class="a" style="left:0;top:0;width:19px;height:19px;border:1px solid #000;background:#fff"></div>
<div class="a" style="left:5px;top:2px;width:12px;height:3px;background:#f0f0f0"></div>
<div class="a" style="left:1px;top:3px;width:3px;height:1px;background:#000"></div>
<div class="a" style="left:8px;top:5px;width:9px;height:3px;background:#f0f0f0"></div>
<div class="a" style="left:1px;top:6px;width:6px;height:1px;background:#000"></div>
<div class="a" style="left:11px;top:8px;width:6px;height:3px;background:#f0f0f0"></div>
<div class="a" style="left:1px;top:9px;width:9px;height:1px;background:#000"></div>
<div class="a" style="left:14px;top:11px;width:3px;height:3px;background:#f0f0f0"></div>
<div class="a" style="left:1px;top:12px;width:12px;height:1px;background:#000"></div>
<div class="a" style="left:1px;top:15px;width:15px;height:1px;background:#000"></div>
</div>
<div class="a" style="left:934px;top:332px;width:19px;height:19px;overflow:hidden">
<div class="a" style="left:0;top:0;width:19px;height:19px;border:1px solid #000;background:#fff"></div>
<div class="a" style="left:5px;top:2px;width:12px;height:3px;background:#f0f0f0"></div>
<div class="a" style="left:1px;top:3px;width:3px;height:1px;background:#000"></div>
<div class="a" style="left:8px;top:5px;width:9px;height:3px;background:#f0f0f0"></div>
<div class="a" style="left:1px;top:6px;width:6px;height:1px;background:#000"></div>
<div class="a" style="left:11px;top:8px;width:6px;height:3px;background:#f0f0f0"></div>
<div class="a" style="left:1px;top:9px;width:9px;height:1px;background:#000"></div>
<div class="a" style="left:14px;top:11px;width:3px;height:3px;background:#f0f0f0"></div>
<div class="a" style="left:1px;top:12px;width:12px;height:1px;background:#000"></div>
<div class="a" style="left:1px;top:15px;width:15px;height:1px;background:#000"></div>
</div>
<div class="a" style="left:814px;top:354px;width:19px;height:19px;overflow:hidden">
<div class="a" style="left:0;top:0;width:19px;height:19px;border:1px solid #000;background:#fff"></div>
<div class="a" style="left:5px;top:2px;width:12px;height:3px;background:#f0f0f0"></div>
<div class="a" style="left:1px;top:3px;width:3px;height:1px;background:#000"></div>
<div class="a" style="left:8px;top:5px;width:9px;height:3px;background:#f0f0f0"></div>
<div class="a" style="left:1px;top:6px;width:6px;height:1px;background:#000"></div>
<div class="a" style="left:11px;top:8px;width:6px;height:3px;background:#f0f0f0"></div>
<div class="a" style="left:1px;top:9px;width:9px;height:1px;background:#000"></div>
<div class="a" style="left:14px;top:11px;width:3px;height:3px;background:#f0f0f0"></div>
<div class="a" style="left:1px;top:12px;width:12px;height:1px;background:#000"></div>
<div class="a" style="left:1px;top:15px;width:15px;height:1px;background:#000"></div>
</div>
<div class="a" style="left:934px;top:354px;width:19px;height:19px;overflow:hidden">
<div class="a" style="left:0;top:0;width:19px;height:19px;border:1px solid #000;background:#fff"></div>
<div class="a" style="left:5px;top:2px;width:12px;height:3px;background:#f0f0f0"></div>
<div class="a" style="left:1px;top:3px;width:3px;height:1px;background:#000"></div>
<div class="a" style="left:8px;top:5px;width:9px;height:3px;background:#f0f0f0"></div>
<div class="a" style="left:1px;top:6px;width:6px;height:1px;background:#000"></div>
<div class="a" style="left:11px;top:8px;width:6px;height:3px;background:#f0f0f0"></div>
<div class="a" style="left:1px;top:9px;width:9px;height:1px;background:#000"></div>
<div class="a" style="left:14px;top:11px;width:3px;height:3px;background:#f0f0f0"></div>
<div class="a" style="left:1px;top:12px;width:12px;height:1px;background:#000"></div>
<div class="a" style="left:1px;top:15px;width:15px;height:1px;background:#000"></div>
</div>
<div class="a" style="left:814px;top:376px;width:19px;height:19px;overflow:hidden">
<div class="a" style="left:0;top:0;width:19px;height:19px;border:1px solid #000;background:#fff"></div>
<div class="a" style="left:5px;top:2px;width:12px;height:3px;background:#f0f0f0"></div>
<div class="a" style="left:1px;top:3px;width:3px;height:1px;background:#000"></div>
<div class="a" style="left:8px;top:5px;width:9px;height:3px;background:#f0f0f0"></div>
<div class="a" style="left:1px;top:6px;width:6px;height:1px;background:#000"></div>
<div class="a" style="left:11px;top:8px;width:6px;height:3px;background:#f0f0f0"></div>
<div class="a" style="left:1px;top:9px;width:9px;height:1px;background:#000"></div>
<div class="a" style="left:14px;top:11px;width:3px;height:3px;background:#f0f0f0"></div>
<div class="a" style="left:1px;top:12px;width:12px;height:1px;background:#000"></div>
<div class="a" style="left:1px;top:15px;width:15px;height:1px;background:#000"></div>
</div>
<div class="a" style="left:934px;top:376px;width:19px;height:19px;overflow:hidden">
<div class="a" style="left:0;top:0;width:19px;height:19px;border:1px solid #000;background:#fff"></div>
<div class="a" style="left:5px;top:2px;width:12px;height:3px;background:#f0f0f0"></div>
<div class="a" style="left:1px;top:3px;width:3px;height:1px;background:#000"></div>
<div class="a" style="left:8px;top:5px;width:9px;height:3px;background:#f0f0f0"></div>
<div class="a" style="left:1px;top:6px;width:6px;height:1px;background:#000"></div>
<div class="a" style="left:11px;top:8px;width:6px;height:3px;background:#f0f0f0"></div>
<div class="a" style="left:1px;top:9px;width:9px;height:1px;background:#000"></div>
<div class="a" style="left:14px;top:11px;width:3px;height:3px;background:#f0f0f0"></div>
<div class="a" style="left:1px;top:12px;width:12px;height:1px;background:#000"></div>
<div class="a" style="left:1px;top:15px;width:15px;height:1px;background:#000"></div>
</div>
<div class="a" style="left:814px;top:398px;width:19px;height:19px;overflow:hidden">
<div class="a" style="left:0;top:0;width:19px;height:19px;border:1px solid #000;background:#fff"></div>
<div class="a" style="left:5px;top:2px;width:12px;height:3px;background:#f0f0f0"></div>
<div class="a" style="left:1px;top:3px;width:3px;height:1px;background:#000"></div>
<div class="a" style="left:8px;top:5px;width:9px;height:3px;background:#f0f0f0"></div>
<div class="a" style="left:1px;top:6px;width:6px;height:1px;background:#000"></div>
<div class="a" style="left:11px;top:8px;width:6px;height:3px;background:#f0f0f0"></div>
<div class="a" style="left:1px;top:9px;width:9px;height:1px;background:#000"></div>
<div class="a" style="left:14px;top:11px;width:3px;height:3px;background:#f0f0f0"></div>
<div class="a" style="left:1px;top:12px;width:12px;height:1px;background:#000"></div>
<div class="a" style="left:1px;top:15px;width:15px;height:1px;background:#000"></div>
</div>
<div class="a" style="left:934px;top:398px;width:19px;height:19px;overflow:hidden">
<div class="a" style="left:0;top:0;width:19px;height:19px;border:1px solid #000;background:#fff"></div>
<div class="a" style="left:5px;top:2px;width:12px;height:3px;background:#f0f0f0"></div>
<div class="a" style="left:1px;top:3px;width:3px;height:1px;background:#000"></div>
<div class="a" style="left:8px;top:5px;width:9px;height:3px;background:#f0f0f0"></div>
<div class="a" style="left:1px;top:6px;width:6px;height:1px;background:#000"></div>
<div class="a" style="left:11px;top:8px;width:6px;height:3px;background:#f0f0f0"></div>
<div class="a" style="left:1px;top:9px;width:9px;height:1px;background:#000"></div>
<div class="a" style="left:14px;top:11px;width:3px;height:3px;background:#f0f0f0"></div>
<div class="a" style="left:1px;top:12px;width:12px;height:1px;background:#000"></div>
<div class="a" style="left:1px;top:15px;width:15px;height:1px;background:#000"></div>
</div>
<div class="a" style="left:814px;top:420px;width:19px;height:19px;overflow:hidden">
<div class="a" style="left:0;top:0;width:19px;height:19px;border:1px solid #000;background:#fff"></div>
<div class="a" style="left:5px;top:2px;width:12px;height:3px;background:#f0f0f0"></div>
<div class="a" style="left:1px;top:3px;width:3px;height:1px;background:#000"></div>
<div class="a" style="left:8px;top:5px;width:9px;height:3px;background:#f0f0f0"></div>
<div class="a" style="left:1px;top:6px;width:6px;height:1px;background:#000"></div>
<div class="a" style="left:11px;top:8px;width:6px;height:3px;background:#f0f0f0"></div>
<div class="a" style="left:1px;top:9px;width:9px;height:1px;background:#000"></div>
<div class="a" style="left:14px;top:11px;width:3px;height:3px;background:#f0f0f0"></div>
<div class="a" style="left:1px;top:12px;width:12px;height:1px;background:#000"></div>
<div class="a" style="left:1px;top:15px;width:15px;height:1px;background:#000"></div>
</div>
<div class="a" style="left:934px;top:420px;width:19px;height:19px;overflow:hidden">
<div class="a" style="left:0;top:0;width:19px;height:19px;border:1px solid #000;background:#fff"></div>
<div class="a" style="left:5px;top:2px;width:12px;height:3px;background:#f0f0f0"></div>
<div class="a" style="left:1px;top:3px;width:3px;height:1px;background:#000"></div>
<div class="a" style="left:8px;top:5px;width:9px;height:3px;background:#f0f0f0"></div>
<div class="a" style="left:1px;top:6px;width:6px;height:1px;background:#000"></div>
<div class="a" style="left:11px;top:8px;width:6px;height:3px;background:#f0f0f0"></div>
<div class="a" style="left:1px;top:9px;width:9px;height:1px;background:#000"></div>
<div class="a" style="left:14px;top:11px;width:3px;height:3px;background:#f0f0f0"></div>
<div class="a" style="left:1px;top:12px;width:12px;height:1px;background:#000"></div>
<div class="a" style="left:1px;top:15px;width:15px;height:1px;background:#000"></div>
</div>
<div class="a" style="left:814px;top:442px;width:19px;height:19px;overflow:hidden">
<div class="a" style="left:0;top:0;width:19px;height:19px;border:1px solid #000;background:#fff"></div>
<div class="a" style="left:5px;top:2px;width:12px;height:3px;background:#f0f0f0"></div>
<div class="a" style="left:1px;top:3px;width:3px;height:1px;background:#000"></div>
<div class="a" style="left:8px;top:5px;width:9px;height:3px;background:#f0f0f0"></div>
<div class="a" style="left:1px;top:6px;width:6px;height:1px;background:#000"></div>
<div class="a" style="left:11px;top:8px;width:6px;height:3px;background:#f0f0f0"></div>
<div class="a" style="left:1px;top:9px;width:9px;height:1px;background:#000"></div>
<div class="a" style="left:14px;top:11px;width:3px;height:3px;background:#f0f0f0"></div>
<div class="a" style="left:1px;top:12px;width:12px;height:1px;background:#000"></div>
<div class="a" style="left:1px;top:15px;width:15px;height:1px;background:#000"></div>
</div>
<div class="a" style="left:934px;top:442px;width:19px;height:19px;overflow:hidden">
<div class="a" style="left:0;top:0;width:19px;height:19px;border:1px solid #000;background:#fff"></div>
<div class="a" style="left:5px;top:2px;width:12px;height:3px;background:#f0f0f0"></div>
<div class="a" style="left:1px;top:3px;width:3px;height:1px;background:#000"></div>
<div class="a" style="left:8px;top:5px;width:9px;height:3px;background:#f0f0f0"></div>
<div class="a" style="left:1px;top:6px;width:6px;height:1px;background:#000"></div>
<div class="a" style="left:11px;top:8px;width:6px;height:3px;background:#f0f0f0"></div>
<div class="a" style="left:1px;top:9px;width:9px;height:1px;background:#000"></div>
<div class="a" style="left:14px;top:11px;width:3px;height:3px;background:#f0f0f0"></div>
<div class="a" style="left:1px;top:12px;width:12px;height:1px;background:#000"></div>
<div class="a" style="left:1px;top:15px;width:15px;height:1px;background:#000"></div>
</div>
<div class="a" style="left:814px;top:464px;width:19px;height:2px;overflow:hidden">
<div class="a" style="left:0;top:0;width:19px;height:19px;border:1px solid #000;background:#fff"></div>
<div class="a" style="left:5px;top:2px;width:12px;height:3px;background:#f0f0f0"></div>
<div class="a" style="left:1px;top:3px;width:3px;height:1px;background:#000"></div>
<div class="a" style="left:8px;top:5px;width:9px;height:3px;background:#f0f0f0"></div>
<div class="a" style="left:1px;top:6px;width:6px;height:1px;background:#000"></div>
<div class="a" style="left:11px;top:8px;width:6px;height:3px;background:#f0f0f0"></div>
<div class="a" style="left:1px;top:9px;width:9px;height:1px;background:#000"></div>
<div class="a" style="left:14px;top:11px;width:3px;height:3px;background:#f0f0f0"></div>
<div class="a" style="left:1px;top:12px;width:12px;height:1px;background:#000"></div>
<div class="a" style="left:1px;top:15px;width:15px;height:1px;background:#000"></div>
</div>
<div class="a" style="left:934px;top:464px;width:19px;height:2px;overflow:hidden">
<div class="a" style="left:0;top:0;width:19px;height:19px;border:1px solid #000;background:#fff"></div>
<div class="a" style="left:5px;top:2px;width:12px;height:3px;background:#f0f0f0"></div>
<div class="a" style="left:1px;top:3px;width:3px;height:1px;background:#000"></div>
<div class="a" style="left:8px;top:5px;width:9px;height:3px;background:#f0f0f0"></div>
<div class="a" style="left:1px;top:6px;width:6px;height:1px;background:#000"></div>
<div class="a" style="left:11px;top:8px;width:6px;height:3px;background:#f0f0f0"></div>
<div class="a" style="left:1px;top:9px;width:9px;height:1px;background:#000"></div>
<div class="a" style="left:14px;top:11px;width:3px;height:3px;background:#f0f0f0"></div>
<div class="a" style="left:1px;top:12px;width:12px;height:1px;background:#000"></div>
<div class="a" style="left:1px;top:15px;width:15px;height:1px;background:#000"></div>
</div>
<div class="a" style="left:13px;top:466px;width:1034px;height:1px;background:#fff"></div>
<div class="a" style="left:12px;top:467px;width:1036px;height:1px;background:#abadb3"></div>
<div class="a" style="left:12px;top:468px;width:1036px;height:10px;background:#f0f0f0"></div>
<div class="a" style="left:1029px;top:245px;width:1px;height:20px;background:#fff"></div>
<div class="a" style="left:1030px;top:245px;width:16px;height:221px;background:#f0f0f0"></div>
<div class="a" style="left:1030px;top:262px;width:15px;height:17px;background:#cdcdcd"></div>
<svg class="a" style="left:1033px;top:250px" width="9" height="9"><path d="M1.6 6.3 L4.5 2.3 L7.4 6.3" fill="none" stroke="#505050" stroke-width="2.2"/></svg>
<svg class="a" style="left:1033px;top:453px" width="9" height="9"><path d="M1.7 2.2 L4.5 6.7 L7.3 2.2" fill="none" stroke="#505050" stroke-width="2.2"/></svg>
<div class="a" style="left:16px;top:472px;width:2px;height:1px;background:#000"></div>
<div class="a" style="left:15px;top:473px;width:4px;height:1px;background:#000"></div>
<div class="a" style="left:14px;top:474px;width:6px;height:1px;background:#000"></div>
<div class="a" style="left:24px;top:472px;width:1px;height:1px;background:#fff"></div>
<div class="a" style="left:23px;top:471px;width:1px;height:1px;background:#000"></div>
<div class="a" style="left:24px;top:475px;width:1px;height:1px;background:#fff"></div>
<div class="a" style="left:23px;top:474px;width:1px;height:1px;background:#000"></div>
<div class="a" style="left:27px;top:472px;width:1px;height:1px;background:#fff"></div>
<div class="a" style="left:26px;top:471px;width:1px;height:1px;background:#000"></div>
<div class="a" style="left:27px;top:475px;width:1px;height:1px;background:#fff"></div>
<div class="a" style="left:26px;top:474px;width:1px;height:1px;background:#000"></div>
<div class="a" style="left:30px;top:472px;width:1px;height:1px;background:#fff"></div>
<div class="a" style="left:29px;top:471px;width:1px;height:1px;background:#000"></div>
<div class="a" style="left:30px;top:475px;width:1px;height:1px;background:#fff"></div>
<div class="a" style="left:29px;top:474px;width:1px;height:1px;background:#000"></div>
<div class="a" style="left:33px;top:472px;width:1px;height:1px;background:#fff"></div>
<div class="a" style="left:32px;top:471px;width:1px;height:1px;background:#000"></div>
<div class="a" style="left:33px;top:475px;width:1px;height:1px;background:#fff"></div>
<div class="a" style="left:32px;top:474px;width:1px;height:1px;background:#000"></div>
</body></html>
